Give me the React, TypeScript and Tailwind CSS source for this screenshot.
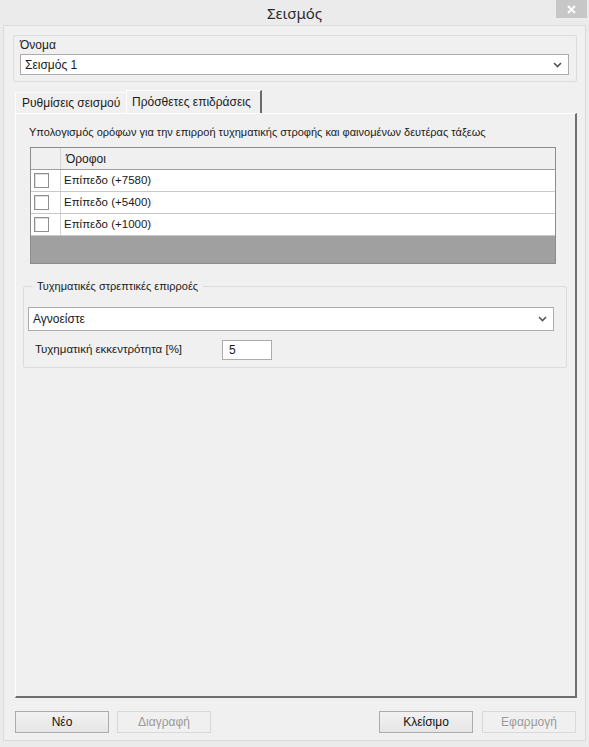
import * as React from 'react';

const font = { fontFamily: '"Liberation Sans", "Noto Sans", sans-serif' };

const Chevron = () => (
  <svg width="9" height="6" viewBox="0 0 9 6" className="shrink-0">
    <path d="M1 1 L4.5 4.5 L8 1" fill="none" stroke="#555" strokeWidth="1.6" />
  </svg>
);

const Combo = ({ value, className }: { value: string; className: string }) => (
  <div
    className={`flex items-center justify-between bg-white border border-[#acacac] pl-[4px] pr-[6px] ${className}`}
  >
    <span className="text-[12px] text-[#1a1a1a]">{value}</span>
    <Chevron />
  </div>
);

const Checkbox = () => (
  <div className="w-[15px] h-[15px] border border-[#8f8f8f] bg-white shadow-[inset_1px_1px_0_#e0e0e0]" />
);

const floors = ['Επίπεδο (+7580)', 'Επίπεδο (+5400)', 'Επίπεδο (+1000)'];

const Button = ({ label, disabled }: { label: string; disabled?: boolean }) => (
  <button
    type="button"
    className={`w-[94px] h-[22px] text-[12px] border ${
      disabled
        ? 'border-[#d9d9d9] bg-[#f0f0f0] text-[#9a9a9a]'
        : 'border-[#acacac] bg-gradient-to-b from-[#f2f2f2] to-[#e5e5e5] text-[#111]'
    }`}
  >
    {label}
  </button>
);

export default function App() {
  return (
    <div className="w-[589px] h-[747px] bg-[#ebebeb] flex flex-col text-[#1a1a1a]" style={font}>
      {/* title bar */}
      <div className="relative h-[25px] shrink-0 flex items-center justify-center">
        <span className="text-[15px] text-[#2b2b2b] pt-[1px]" style={{ fontFamily: '"Noto Sans", sans-serif' }}>
          Σεισμός
        </span>
        <div className="absolute top-0 right-[2px] w-[31px] h-[18px] bg-[#c7c7c7] flex items-center justify-center">
          <svg width="9" height="9" viewBox="0 0 9 9">
            <path d="M1 1 L8 8 M8 1 L1 8" stroke="#fff" strokeWidth="2" />
          </svg>
        </div>
      </div>

      {/* client */}
      <div className="flex-1 mx-[3px] mb-[6px] border border-[#dadada] bg-[#f0f0f0] flex flex-col pl-[9px] pr-[8px] pt-[9px]">
        {/* name group */}
        <div className="h-[47px] border border-[#dcdcdc] rounded-[2px] pl-[6px] pr-[7px] pt-[2px] flex flex-col">
          <span className="text-[12px] leading-[15px] text-[#222]">Όνομα</span>
          <Combo value="Σεισμός 1" className="mt-[1px] h-[21px]" />
        </div>

        {/* tabs */}
        <div className="mt-[8px] flex items-end pl-[2px] h-[23px]">
          <div className="h-[21px] w-[111px] flex items-center pl-[6px] text-[12px] border-t border-l border-[#fbfbfb]">
            Ρυθμίσεις σεισμού
          </div>
          <div className="h-[23px] w-[136px] flex items-center pl-[5px] text-[12px] border-t border-l border-white border-r-2 border-r-[#6a6a6a] bg-[#f0f0f0]">
            Πρόσθετες επιδράσεις
          </div>
        </div>

        {/* tab panel */}
        <div className="ml-[2px] w-[562px] h-[585px] border-t border-l border-white border-r-2 border-b-2 border-r-[#6e6e6e] border-b-[#6e6e6e] flex flex-col">
          <div className="pl-[13px] pt-[10px] text-[11px] leading-[16px]">
            Υπολογισμός ορόφων για την επιρροή τυχηματικής στροφής και φαινομένων δευτέρας τάξεως
          </div>

          {/* table */}
          <div className="ml-[14px] mt-[7px] w-[526px] h-[117px] border border-[#8c8c8c] flex flex-col bg-[#a0a0a0]">
            <div className="h-[22px] flex bg-[#f0f0f0] border-b border-[#a0a0a0]">
              <div className="w-[30px] border-r border-[#d4d4d4]" />
              <div className="flex items-center pl-[5px] text-[12px]">Όροφοι</div>
            </div>
            {floors.map((f) => (
              <div key={f} className="h-[22px] flex bg-white border-b border-[#c8c8c8]">
                <div className="w-[30px] border-r border-[#d4d4d4] flex items-center pl-[3px]">
                  <Checkbox />
                </div>
                <div className="flex items-center pl-[3px] text-[11.5px]">{f}</div>
              </div>
            ))}
          </div>

          {/* torsion group */}
          <fieldset className="ml-[7px] mt-[14px] w-[544px] h-[90px] border border-[#dcdcdc] rounded-[2px] pl-[4px] pr-[12px]">
            <legend className="ml-[4px] px-[5px] text-[11px] leading-[16px]">
              Τυχηματικές στρεπτικές επιρροές
            </legend>
            <Combo value="Αγνοείστε" className="mt-[13px] h-[24px]" />
            <div className="mt-[9px] flex items-center">
              <span className="pl-[7px] w-[194px] text-[11.5px]">Τυχηματική εκκεντρότητα [%]</span>
              <div className="w-[50px] h-[20px] bg-white border border-[#acacac] flex items-center pl-[6px] text-[12px]">
                5
              </div>
            </div>
          </fieldset>
        </div>

        {/* buttons */}
        <div className="mt-[13px] flex items-center pl-[2px] pr-[1px]">
          <div className="flex gap-[8px]">
            <Button label="Νέο" />
            <Button label="Διαγραφή" disabled />
          </div>
          <div className="ml-auto flex gap-[9px]">
            <Button label="Κλείσιμο" />
            <Button label="Εφαρμογή" disabled />
          </div>
        </div>
      </div>
    </div>
  );
}
